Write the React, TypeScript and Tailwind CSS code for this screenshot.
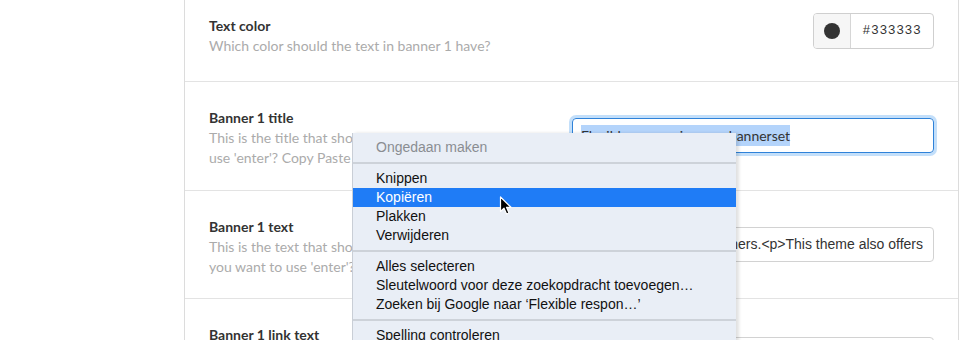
import React from "react";

type Row = {
  title: string;
  lines: string[];
};

const rows: Row[] = [
  { title: "Text color", lines: ["Which color should the text in banner 1 have?"] },
  {
    title: "Banner 1 title",
    lines: [
      "This is the title that shows in banner 1. Do you want to",
      "use 'enter'? Copy Paste <p> in the field.",
    ],
  },
  {
    title: "Banner 1 text",
    lines: [
      "This is the text that shows in banner 1. Do",
      "you want to use 'enter'? Copy Paste <p> in the field.",
    ],
  },
  { title: "Banner 1 link text", lines: ["This is the text of the button in banner 1."] },
];

const Label = ({ row }: { row: Row }) => (
  <div className="flex-1">
    <div className="text-[14px] leading-[21px] font-bold text-[#333]">{row.title}</div>
    {row.lines.map((l) => (
      <div key={l} className="text-[14px] leading-[20px] text-[#ababab] whitespace-nowrap">
        {l}
      </div>
    ))}
  </div>
);

const menuItems: (string | null)[] = [
  "Ongedaan maken",
  null,
  "Knippen",
  "Kopiëren",
  "Plakken",
  "Verwijderen",
  null,
  "Alles selecteren",
  "Sleutelwoord voor deze zoekopdracht toevoegen…",
  "Zoeken bij Google naar ‘Flexible respon…’",
  null,
  "Spelling controleren",
];

const ContextMenu = () => (
  <div className="absolute left-[352px] top-[133px] w-[384px] h-[230px] bg-[#e9eef6] border-l border-[#c9ced6] shadow-[3px_0_3px_rgba(0,0,0,0.12)] pt-[5px] font-['Liberation_Sans',Arial,sans-serif] text-[14px]">
    {menuItems.map((item, i) =>
      item === null ? (
        <div key={i} className="h-[12px] flex items-center">
          <div className="h-[2px] w-full bg-[#cdd2d9]" />
        </div>
      ) : (
        <div
          key={i}
          className={
            item === "Kopiëren"
              ? "h-[19px] leading-[19px] pl-[23px] bg-[#1f7cf6] text-white"
              : item === "Ongedaan maken"
              ? "h-[19px] leading-[19px] pl-[23px] text-[#8a8d92]"
              : "h-[19px] leading-[19px] pl-[23px] text-[#111]"
          }
        >
          {item}
        </div>
      )
    )}
  </div>
);

const Cursor = () => (
  <svg
    className="absolute left-[499px] top-[196px]"
    width="14"
    height="20"
    viewBox="0 0 14 20"
  >
    <path
      d="M1.5 1 L1.5 15.5 L5 12.2 L7.6 18 L10 17 L7.5 11.3 L12 11.3 Z"
      fill="#000"
      stroke="#fff"
      strokeWidth="1.2"
      strokeLinejoin="round"
    />
  </svg>
);

export default function App() {
  return (
    <div className="relative w-[966px] h-[340px] overflow-hidden bg-white font-['Lato',sans-serif]">
      <div className="ml-[184px] w-[775px] -mt-[9px] border-x border-[#dcdcdc]">
        {/* text color */}
        <div className="flex items-start gap-3 pl-[24px] pr-[24px] pt-[24px] pb-[25px] border-b border-[#e3e3e3]">
          <Label row={rows[0]} />
          <div className="-mt-[2px] flex h-[36px] border border-[#cfcfcf] rounded-[4px] overflow-hidden">
            <div className="w-[37px] flex items-center justify-center bg-[#f6f6f6] border-r border-[#d6d6d6]">
              <div className="w-[16px] h-[16px] rounded-full bg-[#333]" />
            </div>
            <div className="w-[82px] flex items-center justify-center font-['Liberation_Mono',monospace] text-[13px] tracking-[0.6px] text-[#333]">
              #333333
            </div>
          </div>
        </div>

        {/* banner 1 title */}
        <div className="flex items-center gap-3 pl-[24px] pr-[24px] pt-[25px] pb-[22px] border-b border-[#e3e3e3]">
          <Label row={rows[1]} />
          <div className="w-[362px] h-[35px] mb-[4px] rounded-[4px] border border-[#2f82d9] shadow-[0_0_0_3px_rgba(146,196,245,0.55)] flex items-center px-[8px] text-[14px] text-[#333]">
            <span className="bg-[#b4d4fb]">Flexible responsive &lt;p&gt; bannerset</span>
          </div>
        </div>

        {/* banner 1 text */}
        <div className="flex items-center gap-3 pl-[24px] pr-[24px] pt-[25px] pb-[21px] border-b border-[#e3e3e3]">
          <Label row={rows[2]} />
          <div className="w-[362px] h-[35px] mb-[4px] rounded-[4px] border border-[#d2d2d2] flex items-center justify-end overflow-hidden pr-[10px] font-['Liberation_Sans',Arial,sans-serif] text-[14px] text-[#333] whitespace-nowrap">
            This is a flexible responsive bannerset with 3 banners.&lt;p&gt;This theme also offers
          </div>
        </div>

        {/* banner 1 link text */}
        <div className="flex items-start gap-3 pl-[24px] pr-[24px] pt-[25px] pb-[23px]">
          <Label row={rows[3]} />
          <div className="mt-[13px] w-[362px] h-[35px] rounded-[4px] border border-[#d2d2d2]" />
        </div>
      </div>

      <ContextMenu />
      <Cursor />
    </div>
  );
}
